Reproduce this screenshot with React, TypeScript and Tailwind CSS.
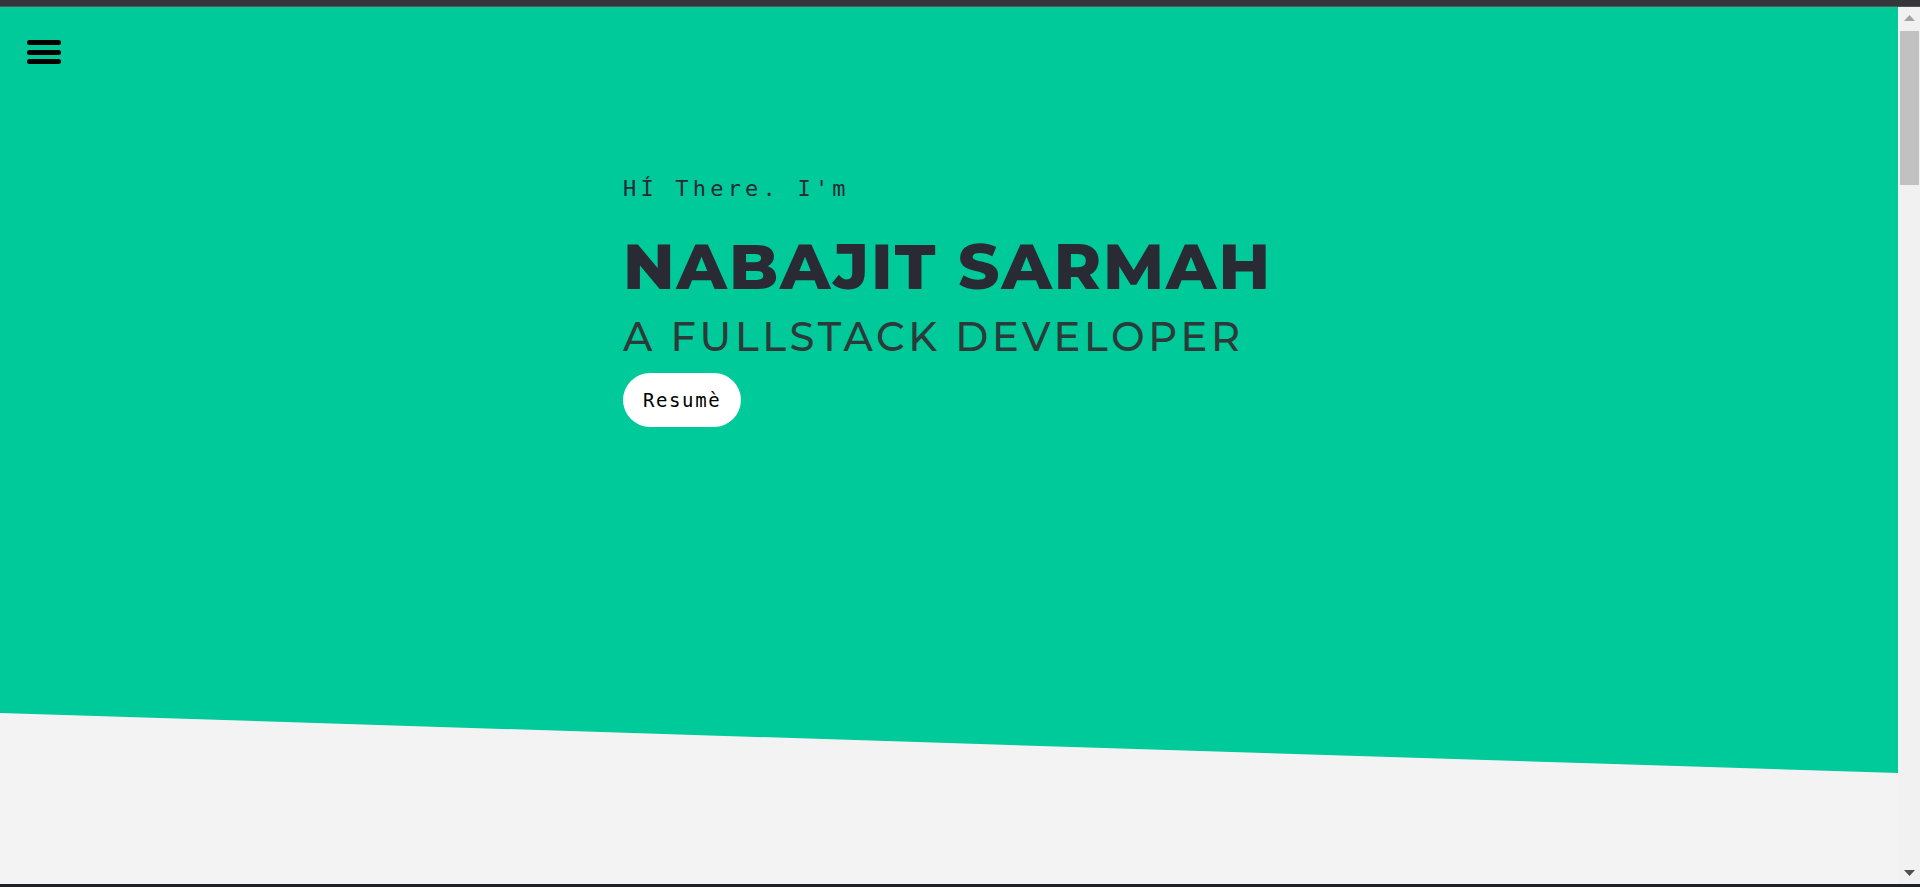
import React from "react";

function Hamburger() {
  return (
    <button className="flex flex-col gap-[4.5px] w-[34px]">
      <span className="block h-[5px] w-full rounded-full bg-black" />
      <span className="block h-[5px] w-full rounded-full bg-black" />
      <span className="block h-[5px] w-full rounded-full bg-black" />
    </button>
  );
}

function Scrollbar() {
  return (
    <div className="w-[22px] h-full bg-[#f1f1f1] flex flex-col">
      <div className="h-[22px] flex items-center justify-center">
        <svg width="11" height="6" viewBox="0 0 11 6">
          <polygon points="5.5,0 11,6 0,6" fill="#a3a3a3" />
        </svg>
      </div>
      <div className="mt-[2px] ml-[2px] mr-[1px] h-[154px] bg-[#c1c1c1]" />
      <div className="flex-1" />
      <div className="h-[22px] flex items-center justify-center">
        <svg width="11" height="6" viewBox="0 0 11 6">
          <polygon points="0,0 11,0 5.5,6" fill="#505050" />
        </svg>
      </div>
    </div>
  );
}

function Hero() {
  return (
    <section className="h-[766px] bg-[#00c99a] [clip-path:polygon(0_0,100%_0,100%_100%,0_92.17%)]">
      <div className="pt-[33px] pl-[27px]">
        <Hamburger />
      </div>
      <div className="flex justify-center">
        <div className="w-[652px] flex flex-col items-start mt-[110px]">
          <p className="font-['DejaVu_Sans_Mono',monospace] text-[22px] leading-[30px] tracking-[4.2px] text-[#2a2a35]">
            HÍ There. I'm
          </p>
          <h1 className="mt-[26px] font-['Montserrat','DejaVu_Sans',sans-serif] font-extrabold text-[64px] leading-[72px] tracking-[2px] text-[#2a2a35] whitespace-nowrap">
            NABAJIT SARMAH
          </h1>
          <h2 className="mt-[13px] font-['Montserrat','DejaVu_Sans',sans-serif] font-medium text-[40px] leading-[44px] tracking-[3.7px] text-[#2c3a39] whitespace-nowrap">
            A FULLSTACK DEVELOPER
          </h2>
          <a
            href="#"
            className="mt-[14px] h-[54px] px-[20px] flex items-center rounded-full bg-white font-['DejaVu_Sans_Mono',monospace] text-[19px] leading-[24px] tracking-[1.6px] text-black"
          >
            Resumè
          </a>
        </div>
      </div>
    </section>
  );
}

export default function App() {
  return (
    <div className="h-[887px] w-full overflow-hidden flex flex-col bg-[#f3f3f3]">
      <div className="h-[7px] shrink-0 bg-[#35363a] border-b border-[#55565a]" />
      <div className="flex-1 flex min-h-0">
        <main className="flex-1 flex flex-col bg-[#f3f3f3]">
          <Hero />
        </main>
        <Scrollbar />
      </div>
      <div className="h-[3px] shrink-0 bg-[#202124]" />
    </div>
  );
}
